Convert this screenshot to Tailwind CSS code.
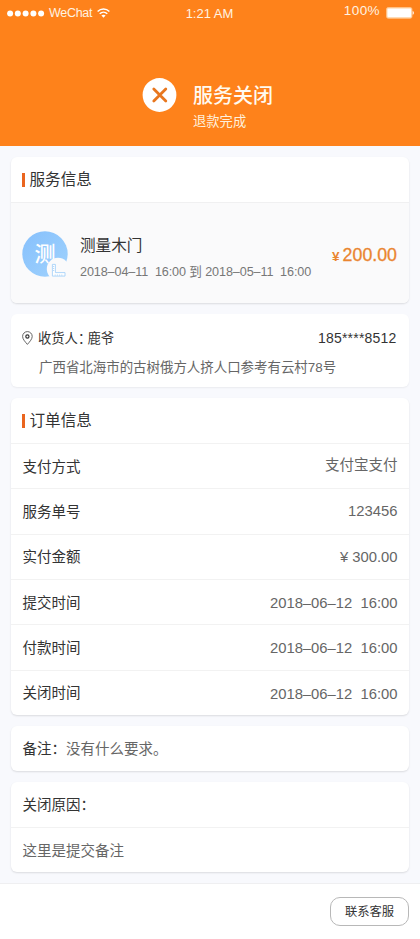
<!DOCTYPE html>
<html lang="zh-CN">
<head>
<meta charset="utf-8">
<meta name="viewport" content="width=device-width, initial-scale=1">
<title>服务关闭</title>
<script src="https://cdn.jsdelivr.net/npm/@tailwindcss/browser@4"></script>
</head>
<body class="bg-[#f8f9fd] font-['Liberation_Sans','Noto_Sans_CJK_SC',sans-serif] text-[#333]">
<div class="flex h-[939px] w-[420px] flex-col overflow-hidden">

  <header class="h-[146px] shrink-0 bg-[#fe821b] text-white">
    <div class="grid h-6 grid-cols-3 items-center pr-[6px] pl-[7px] text-[#fff3e2]">
      <div class="flex items-center">
        <svg class="h-[7px] w-[38px]" viewBox="0 0 38 7" fill="#fff"><circle cx="3.1" cy="3.5" r="3"/><circle cx="10.8" cy="3.5" r="3"/><circle cx="18.6" cy="3.5" r="3"/><circle cx="26.4" cy="3.5" r="3"/><circle cx="34.1" cy="3.5" r="3"/></svg>
        <span class="ml-[4px] text-[12.5px] leading-6 tracking-[-0.3px]">WeChat</span>
        <svg class="ml-[5px] h-[10px] w-[13px]" viewBox="0 0 13 10" fill="none" stroke="#fff" stroke-width="1.4"><path d="M.6 3.6C4 .1 9 .1 12.4 3.6M2.7 5.8c2.2-2.1 5.4-2.1 7.6 0"/><path d="M4.4 7.5c1.2-1.1 3-1.1 4.2 0L6.5 9.7z" fill="#fff" stroke="none"/></svg>
      </div>
      <div class="pt-[2px] pr-[2px] text-center text-[13px] leading-6">1:21 AM</div>
      <div class="flex items-center justify-end">
        <span class="-mt-[4px] text-[13.5px] leading-6 tracking-[0.4px]">100%</span>
        <svg class="-mt-px ml-[6px] h-3 w-7" viewBox="0 0 28 12"><rect x=".5" y=".5" width="25.5" height="10.8" rx="1.8" fill="#ffe0be" stroke="#ffc58d" stroke-width=".8"/><rect x="1.6" y="1.7" width="23.4" height="8.4" rx="1" fill="#fff"/><path d="M26.7 4c1.5.7 1.5 3.1 0 3.8z" fill="#fff"/></svg>
      </div>
    </div>
    <div class="mt-[53px] flex pl-[142px]">
      <svg class="mt-px h-[34px] w-[35px]" viewBox="0 0 35 34"><circle cx="17.5" cy="17" r="16.9" fill="#fff"/><path d="M11.8 11l12 12m0-12-12 12" stroke="#e8771f" stroke-width="2.8" stroke-linecap="round"/></svg>
      <div class="ml-4 pt-px">
        <h1 class="text-[20px] leading-9 font-medium text-[#fffaf0]">服务关闭</h1>
        <p class="text-[13.3px] leading-4 text-[#fff0dc]">退款完成</p>
      </div>
    </div>
  </header>

  <main class="flex shrink-0 flex-col gap-[11px] px-[11px] pt-[11px]">
    <section class="h-[146px] overflow-hidden rounded-[6px] bg-white shadow-[0_1px_2px_rgba(0,0,0,0.12)]">
      <h2 class="flex h-[46px] items-center border-b border-[#f0f0f1] pl-[11px] text-[15.6px]"><i class="mr-[5px] h-[14px] w-[2.5px] bg-[#ea651f]"></i>服务信息</h2>
      <div class="flex h-[100px] items-center bg-[#fafafb] pr-[12px] pl-[11px]">
        <svg class="mt-px h-[46px] w-[46px]" viewBox="0 0 46 46">
          <defs><linearGradient id="av" x1="0" y1="0" x2="1" y2="1"><stop offset="0" stop-color="#86c0fc"/><stop offset="1" stop-color="#a0d2fd"/></linearGradient></defs>
          <circle cx="23" cy="23" r="22.7" fill="url(#av)"/>
          <text x="12.5" y="30" font-size="21" font-weight="500" fill="#fff" class="font-['Noto_Sans_CJK_SC',sans-serif]">测</text>
          <circle cx="36" cy="38" r="11.2" fill="#fafafb"/>
          <path d="M30.4 33.4h3v8.2h9.6v3.5H30.4z" fill="#fff" stroke="#a7d1f8" stroke-width=".9"/>
          <path d="M31 35.5h1.2m-1.2 2h1.2m-1.2 2h1.2m1 5.2v-1.2m2.2 1.2v-1.2m2.2 1.2v-1.2m2.2 1.2v-1.2" stroke="#a7d1f8" stroke-width=".8"/>
        </svg>
        <div class="ml-[12px] pt-[11px]">
          <div class="text-[15.6px] leading-6">测量木门</div>
          <div class="mt-[3px] text-[12.6px] leading-[22px] tracking-[-0.1px] whitespace-pre text-[#777]">2018–04–11  16:00 到 2018–05–11  16:00</div>
        </div>
        <div class="ml-auto flex items-baseline pt-[4px] text-[#ea8530]"><span class="mr-[3px] text-[13.5px] font-bold">¥</span><span class="text-[17.8px] [-webkit-text-stroke:0.3px]">200.00</span></div>
      </div>
    </section>

    <section class="h-[73px] rounded-[6px] bg-white px-[11px] pt-[12px] shadow-[0_1px_2px_rgba(0,0,0,0.06)]">
      <div class="flex h-6 items-center pr-[1.5px]">
        <svg class="h-[14px] w-[11px]" viewBox="0 0 11 14" fill="none" stroke="#555"><path d="M5.4 13.4C2.8 10.4.6 8 .6 5.4a4.8 4.8 0 0 1 9.6 0c0 2.6-2.2 5-4.8 8z" stroke-width=".9"/><circle cx="5.4" cy="5.5" r="1.6" stroke="#333" stroke-width="1.2"/></svg>
        <span class="ml-[5px] pt-px text-[13.3px]">收货人<span class="mr-[3px] [font-feature-settings:'halt']">：</span>鹿爷</span>
        <span class="ml-auto text-[14px] tracking-[0.2px]">185****8512</span>
      </div>
      <p class="mt-[6px] pl-[17px] text-[13.45px] leading-6 text-[#666]">广西省北海市的古树俄方人挤人口参考有云村78号</p>
    </section>

    <section class="h-[317px] rounded-[6px] bg-white shadow-[0_1px_2px_rgba(0,0,0,0.12)]">
      <h2 class="flex h-[45px] items-center pt-px pl-[11px] text-[15.6px]"><i class="mr-[5px] h-[14px] w-[2.5px] bg-[#ea651f]"></i>订单信息</h2>
      <dl class="text-[14.5px] [&>div]:flex [&>div]:h-[45.33px] [&>div]:items-center [&>div]:justify-between [&>div]:border-t [&>div]:border-[#f2f2f2] [&>div]:pt-[3px] [&>div]:pr-[11.5px] [&>div]:pl-[11.5px]">
        <div><dt>支付方式</dt><dd class="-mt-[4px] text-[#666]">支付宝支付</dd></div>
        <div><dt>服务单号</dt><dd class="-mt-[4px] text-[14.8px] text-[#666]">123456</dd></div>
        <div><dt>实付金额</dt><dd class="-mt-[3px] text-[14.8px] text-[#666]">¥<span class="ml-[4px]">300.00</span></dd></div>
        <div><dt>提交时间</dt><dd class="-mt-px text-[14.8px] whitespace-pre text-[#666]">2018–06–12  16:00</dd></div>
        <div><dt>付款时间</dt><dd class="-mt-px text-[14.8px] whitespace-pre text-[#666]">2018–06–12  16:00</dd></div>
        <div><dt>关闭时间</dt><dd class="-mt-px text-[14.8px] whitespace-pre text-[#666]">2018–06–12  16:00</dd></div>
      </dl>
    </section>

    <section class="flex h-[45px] items-center rounded-[6px] bg-white pt-[3px] pl-[11.5px] text-[14.5px] shadow-[0_1px_2px_rgba(0,0,0,0.12)]">备注：<span class="text-[#666]">没有什么要求。</span></section>

    <section class="h-[90px] rounded-[6px] bg-white text-[14.5px] shadow-[0_1px_2px_rgba(0,0,0,0.12)]">
      <h3 class="flex h-[45px] items-center pt-[3px] pl-[11.5px]">关闭原因：</h3>
      <p class="flex h-[45px] items-center border-t border-[#f2f2f2] pt-[4px] pl-[11.5px] text-[#666]">这里是提交备注</p>
    </section>
  </main>

  <footer class="mt-[11px] flex flex-1 justify-end border-t border-[#efeff1] bg-white pt-[13px] pr-[11px]">
    <button class="h-[29px] w-[79px] rounded-[10px] border border-[#b8b8b8] pt-px text-[12.3px] leading-[26px]">联系客服</button>
  </footer>
</div>
</body>
</html>
